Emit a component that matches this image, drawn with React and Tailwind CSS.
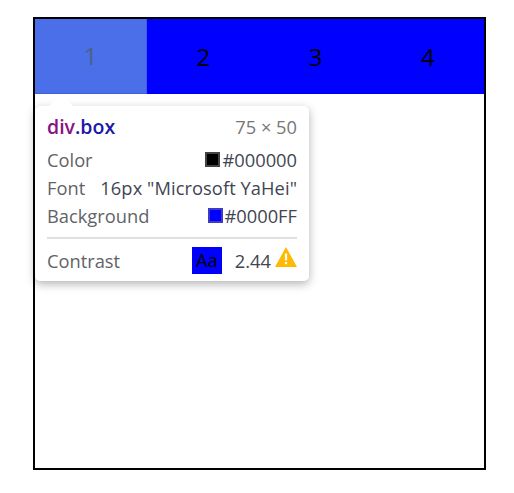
import React from 'react';

const font = "font-['Open_Sans','Noto_Sans',sans-serif]";

const Swatch = ({ color, border, className }) => (
    <span className={`inline-block w-[15px] h-[15px] border-2 mb-[2px] ${border} ${color} ${className || ''}`} />
);

const Row = ({ label, children }) => (
    <div className="flex items-center justify-between h-[28px]">
        <span className="text-[#5f6368]">{label}</span>
        <span className="flex items-center text-[#3f4652]">{children}</span>
    </div>
);

const Warning = () => (
    <svg width="22" height="20" viewBox="0 0 22 20" className="ml-[4px] mb-[9px]">
        <path d="M11 0 L22 20 H0 Z" fill="#ffb900" />
        <rect x="9.9" y="6.5" width="2.2" height="7" fill="#fff" />
        <rect x="9.9" y="15" width="2.2" height="2.2" fill="#fff" />
    </svg>
);

const Tooltip = () => (
    <div className="absolute left-0 top-[87px] w-[274px] h-[175px] bg-white rounded-[5px] shadow-[0_3px_10px_rgba(0,0,0,0.3)] px-[12px] pt-[7px] text-[18.3px] leading-[24px]">
        <span className="absolute left-[14px] -top-[12px] w-0 h-0 border-x-[12px] border-x-transparent border-b-[12px] border-b-white" />
        <div className="flex items-center justify-between h-[27px] mb-[6px]">
            <span className="font-semibold text-[19.5px]">
                <span className="text-[#881280]">div</span>
                <span className="text-[#1a1aa6]">.box</span>
            </span>
            <span className="text-[#777]">75 × 50</span>
        </div>
        <Row label="Color">
            <Swatch color="bg-black" border="border-[#444]" className="mr-[2px]" />#000000
        </Row>
        <Row label="Font">
            <span className="tracking-[0.07px]">16px "Microsoft YaHei"</span>
        </Row>
        <Row label="Background">
            <Swatch color="bg-[#0000ff]" border="border-[#3b3bc4]" className="mr-[2px]" />#0000FF
        </Row>
        <div className="h-[2px] bg-[#e0e0e0] mt-[7px]" />
        <div className="flex items-center justify-between h-[44px]">
            <span className="text-[#5f6368]">Contrast</span>
            <span className="flex items-center text-[#3f4652]">
                <span className="w-[30px] h-[27px] mb-[2px] bg-[#0000ff] text-black flex items-center justify-center mr-[13px]">Aa</span>
                2.44
                <Warning />
            </span>
        </div>
    </div>
);

const App = () => {
    return (
        <div className={`w-[514px] h-[493px] bg-white pt-[17px] pl-[33px] ${font}`}>
            <div className="relative w-[453px] h-[453px] border-2 border-black">
                <div className="flex h-[75px] text-[24px] text-black">
                    <div className="w-1/4 flex items-center justify-center bg-[#4a6fe8] text-[#4a6280] border-r border-b border-[#3f5fe0]">1</div>
                    <div className="w-1/4 flex items-center justify-center bg-[#0000ff]">2</div>
                    <div className="w-1/4 flex items-center justify-center bg-[#0000ff]">3</div>
                    <div className="w-1/4 flex items-center justify-center bg-[#0000ff]">4</div>
                </div>
                <Tooltip />
            </div>
        </div>
    );
};

export default App;
